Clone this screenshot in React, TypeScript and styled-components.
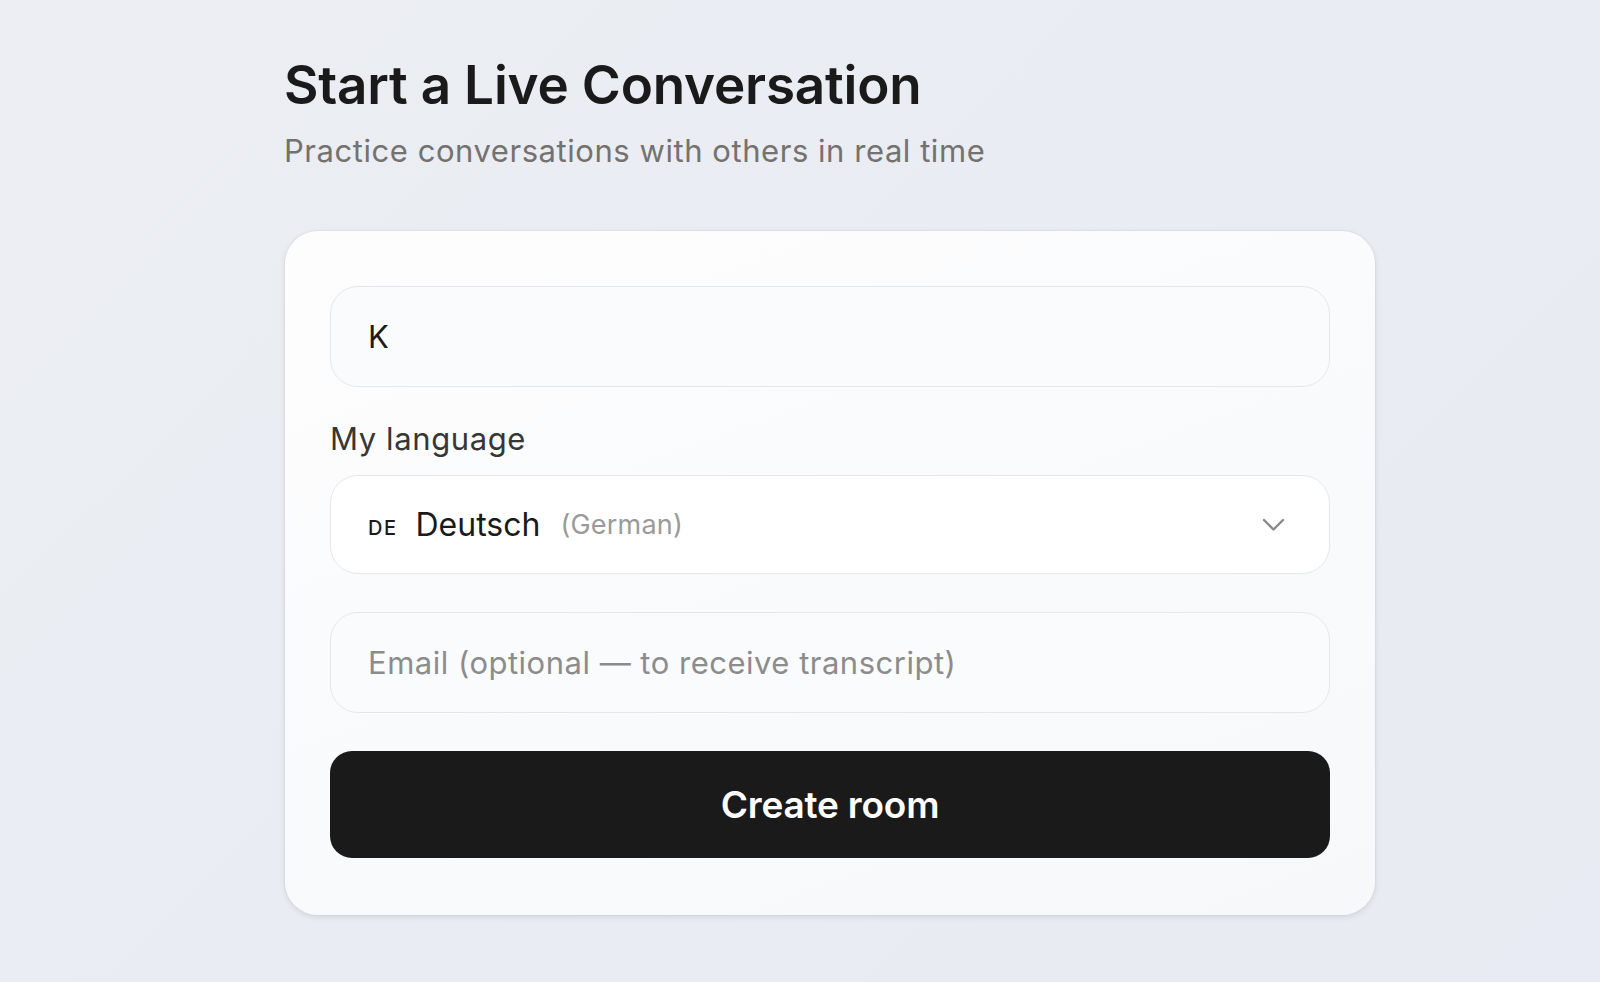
import styled, { createGlobalStyle } from "styled-components";
import { useState } from "react";

const GlobalStyle = createGlobalStyle`
  html, body {
    margin: 0;
    padding: 0;
  }
  body {
    min-height: 982px;
    background: linear-gradient(135deg, #eceef3 0%, #e9ecf2 50%, #e8ebf3 100%);
    font-family: "Inter", "Noto Sans", sans-serif;
    -webkit-font-smoothing: antialiased;
  }
`;

const Page = styled.main`
  min-height: 982px;
  box-sizing: border-box;
  padding: 54px 0 0 285px;
`;

const Header = styled.header`
  display: flex;
  flex-direction: column;
  gap: 14px;
  margin-left: -1px;
`;

const Title = styled.h1`
  margin: 0;
  font-size: 53px;
  line-height: 62px;
  font-weight: 600;
  letter-spacing: -0.2px;
  color: #1a1a1a;
`;

const Subtitle = styled.p`
  margin: 0;
  font-size: 31px;
  line-height: 42px;
  font-weight: 400;
  letter-spacing: 0.55px;
  color: #74726f;
`;

const Card = styled.section`
  margin-top: 59px;
  width: 1090px;
  box-sizing: border-box;
  padding: 55px 45px 57px;
  border-radius: 33px;
  background: linear-gradient(160deg, #fdfdfe 0%, #f9fafb 60%, #f7f8fa 100%);
  box-shadow: 0 2px 6px rgba(20, 24, 40, 0.1), 0 0 0 1px rgba(20, 24, 40, 0.03);
  display: flex;
  flex-direction: column;
  gap: 38px;
`;

const Field = styled.div`
  display: flex;
  flex-direction: column;
  gap: 18px;
`;

const Label = styled.label`
  margin-top: -4px;
  font-size: 31px;
  line-height: 36px;
  letter-spacing: 0.6px;
  color: #363636;
`;

const TextInput = styled.input`
  height: 101px;
  box-sizing: border-box;
  width: 100%;
  padding: 0 37px;
  border: 1px solid #e6e7ea;
  border-radius: 28px;
  background: #fafbfc;
  font-family: "Inter", "Noto Sans", sans-serif;
  font-size: 31px;
  letter-spacing: 0.5px;
  color: #1a1a1a;
  outline: none;

  &::placeholder {
    color: #8c8c8c;
  }
`;

const Select = styled.button`
  height: 99px;
  box-sizing: border-box;
  width: 100%;
  padding: 0 44px 0 37px;
  border: 1px solid #e6e7ea;
  border-radius: 28px;
  background: #ffffff;
  display: flex;
  align-items: center;
  font-family: "Inter", "Noto Sans", sans-serif;
  cursor: pointer;
`;

const Code = styled.span`
  font-size: 20px;
  font-weight: 500;
  letter-spacing: 1.5px;
  color: #1a1a1a;
  margin-top: 6px;
  margin-right: 18px;
`;

const LangName = styled.span`
  font-size: 32px;
  color: #1a1a1a;
  margin-right: 20px;
`;

const LangEnglish = styled.span`
  font-size: 27px;
  letter-spacing: 0.2px;
  color: #9a9a9a;
  flex: 1;
  text-align: left;
`;

const Chevron = styled.svg`
  width: 23px;
  height: 14px;
  color: #8a8a8a;
`;

const PrimaryButton = styled.button`
  height: 107px;
  width: 100%;
  border: none;
  border-radius: 22px;
  background: #1a1a1a;
  color: #ffffff;
  font-family: "Inter", "Noto Sans", sans-serif;
  font-size: 37px;
  font-weight: 600;
  letter-spacing: -0.2px;
  cursor: pointer;
`;

export default function App(): JSX.Element {
  const [name, setName] = useState("K");
  const [email, setEmail] = useState("");

  return (
    <>
      <GlobalStyle />
      <Page>
        <Header>
          <Title>Start a Live Conversation</Title>
          <Subtitle>Practice conversations with others in real time</Subtitle>
        </Header>
        <Card>
          <TextInput value={name} onChange={(e) => setName(e.target.value)} />
          <Field>
            <Label>My language</Label>
            <Select type="button">
              <Code>DE</Code>
              <LangName>Deutsch</LangName>
              <LangEnglish>(German)</LangEnglish>
              <Chevron
                viewBox="0 0 23 14"
                fill="none"
                stroke="currentColor"
                strokeWidth={2.4}
                strokeLinecap="round"
                strokeLinejoin="round"
              >
                <path d="M2 2l9.5 9.5L21 2" />
              </Chevron>
            </Select>
          </Field>
          <TextInput
            type="email"
            value={email}
            onChange={(e) => setEmail(e.target.value)}
            placeholder="Email (optional — to receive transcript)"
          />
          <PrimaryButton type="button">Create room</PrimaryButton>
        </Card>
      </Page>
    </>
  );
}
